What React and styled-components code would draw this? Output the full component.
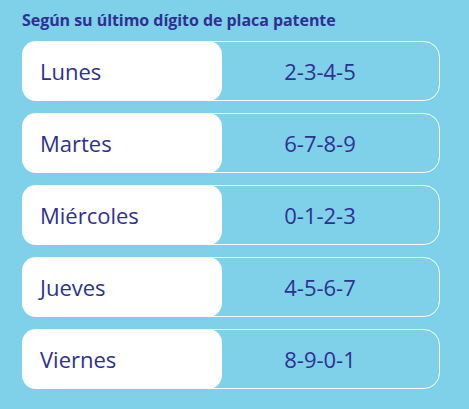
import React from "react";
import styled, { createGlobalStyle } from "styled-components";

const Global = createGlobalStyle`
  html, body { margin: 0; padding: 0; background: #7fd0e9; }
  body { font-family: "Open Sans", "Noto Sans", sans-serif; }
`;

const Page = styled.div`
  width: 469px;
  height: 409px;
  box-sizing: border-box;
  padding: 10px 29px 0 22px;
  background: #7fd0e9;
`;

const Title = styled.h1`
  margin: 0 0 11px 0;
  font-size: 16px;
  font-weight: 700;
  line-height: 20px;
  color: #2e3192;
  letter-spacing: -0.05px;
`;

const List = styled.div`
  display: flex;
  flex-direction: column;
  gap: 12px;
`;

const Row = styled.div`
  display: grid;
  grid-template-columns: 199px 1fr;
  height: 60px;
  box-sizing: border-box;
  border: 1px solid #ffffff;
  border-radius: 16px;
`;

const Day = styled.div`
  margin: -1px 0 -1px -1px;
  background: #ffffff;
  border-radius: 14px;
  display: flex;
  align-items: center;
  padding-left: 18px;
  font-size: 22px;
  color: #2e3192;
`;

const Digits = styled.div`
  display: flex;
  align-items: center;
  justify-content: center;
  margin-left: -21px;
  font-size: 22px;
  color: #2e3192;
`;

const data = [
  ["Lunes", "2-3-4-5"],
  ["Martes", "6-7-8-9"],
  ["Miércoles", "0-1-2-3"],
  ["Jueves", "4-5-6-7"],
  ["Viernes", "8-9-0-1"],
];

export default function App() {
  return (
    <Page>
      <Global />
      <Title>Según su último dígito de placa patente</Title>
      <List>
        {data.map(([d, n]) => (
          <Row key={d}>
            <Day>{d}</Day>
            <Digits>{n}</Digits>
          </Row>
        ))}
      </List>
    </Page>
  );
}
